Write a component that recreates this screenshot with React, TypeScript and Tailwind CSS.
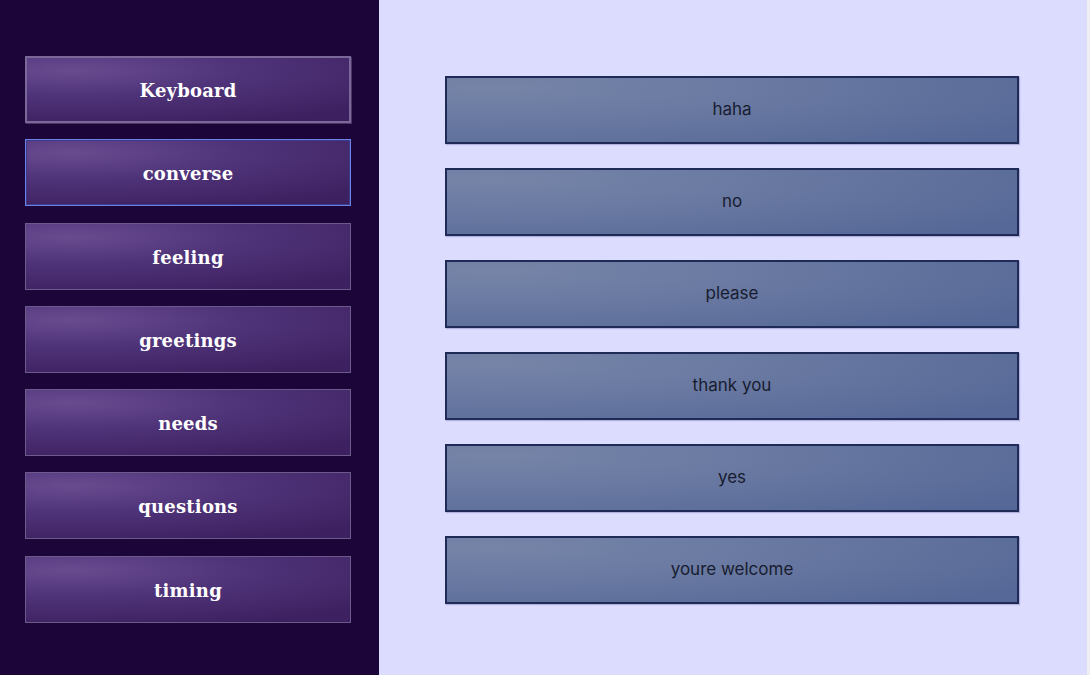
const categories = ['Keyboard', 'converse', 'feeling', 'greetings', 'needs', 'questions', 'timing'];
const phrases = ['haha', 'no', 'please', 'thank you', 'yes', 'youre welcome'];

function CategoryButton({ label, index }: { label: string; index: number }) {
  const border =
    index === 0
      ? 'border-2 border-[#7b6899] shadow-[1px_1px_0_#4a3768]'
      : index === 1
        ? 'border border-[#6b82e8] shadow-[inset_0_0_0_1px_#3e3a8a]'
        : 'border border-[#6b5a8a]';
  return (
    <button
      className={`h-[67px] w-full ${border} bg-[radial-gradient(ellipse_120%_90%_at_14%_20%,#684b8f_0%,#4f3379_45%,#3d205f_100%)] pt-[2px] text-[18px] font-bold tracking-[0.2px] text-white [font-family:'DejaVu_Serif',serif]`}
    >
      {label}
    </button>
  );
}

function PhraseButton({ label }: { label: string }) {
  return (
    <button className="h-[68px] w-full border-2 border-[#1f2b56] bg-[radial-gradient(ellipse_110%_120%_at_8%_15%,#7684a7_0%,#6a7aa2_40%,#566897_100%)] text-[17px] text-[#181c30] shadow-[1px_1px_1px_rgba(80,80,150,0.3)] [font-family:'Inter',sans-serif]">
      {label}
    </button>
  );
}

export default function App() {
  return (
    <div className="flex h-[675px] w-[1090px] overflow-hidden">
      <aside className="flex w-[379px] shrink-0 flex-col gap-[16.3px] bg-[#1c0538] pl-[25px] pr-[28px] pt-[56px]">
        {categories.map((c, i) => (
          <CategoryButton key={c} label={c} index={i} />
        ))}
      </aside>
      <main className="flex flex-1 flex-col gap-[24px] bg-[#dcdcfe] pl-[66px] pr-[68px] pt-[76px]">
        {phrases.map((p) => (
          <PhraseButton key={p} label={p} />
        ))}
      </main>
      <div className="w-[3px] bg-[#efeff3]" />
    </div>
  );
}
